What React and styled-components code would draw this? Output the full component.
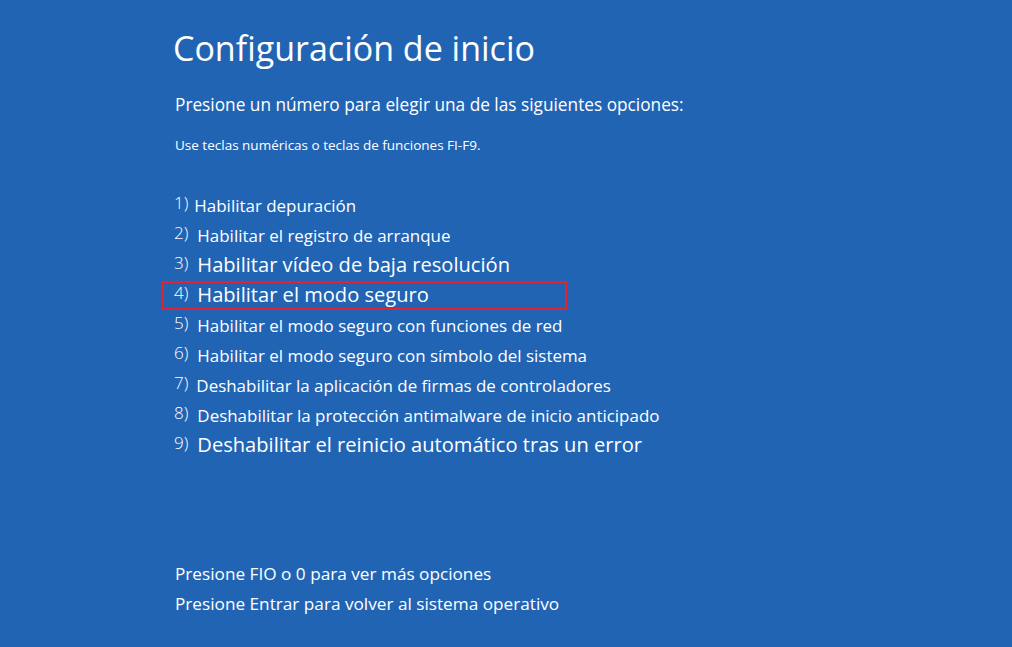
import React from 'react';
import styled, { createGlobalStyle } from 'styled-components';

const GlobalStyle = createGlobalStyle`
  html, body {
    margin: 0;
    padding: 0;
    background: #2264b4;
  }
  body {
    font-family: "Open Sans", "Liberation Sans", sans-serif;
    color: #ffffff;
  }
`;

const Screen = styled.div`
  box-sizing: border-box;
  width: 100%;
  height: 100vh;
  background: #2264b4;
  padding: 28px 0 0 173px;
  overflow: hidden;
`;

const Title = styled.h1`
  margin: 0;
  font-size: 34px;
  line-height: 40px;
  font-weight: 400;
`;

const Prompt = styled.p`
  margin: 27px 0 0 2px;
  font-size: 17.25px;
  line-height: 20px;
`;

const Hint = styled.p`
  margin: 22px 0 0 2px;
  font-size: 13.5px;
  line-height: 16px;
`;

const OptionList = styled.ol`
  list-style: none;
  margin: 35px 0 0 1px;
  padding: 0;
`;

const Option = styled.li`
  position: relative;
  height: 30px;
  line-height: 30px;
  white-space: nowrap;
  font-size: ${p => (p.$large ? '20.1px' : '16.95px')};

  &::after {
    content: '';
    display: ${p => (p.$selected ? 'block' : 'none')};
    position: absolute;
    left: -12px;
    top: 3px;
    width: 405px;
    height: 29px;
    box-sizing: border-box;
    border: 2px solid #e3222b;
  }
`;

const Num = styled.span`
  display: inline-block;
  font-size: 17px;
  font-weight: 300;
  vertical-align: 3px;
  margin-right: ${p => p.$gap}px;
`;

const Footer = styled.div`
  margin: 101px 0 0 2px;
`;

const FooterLine = styled.p`
  margin: 0;
  font-size: 17.2px;
  line-height: 30px;
`;

const options = [
  { text: 'Habilitar depuración', gap: 6 },
  { text: 'Habilitar el registro de arranque', gap: 9 },
  { text: 'Habilitar vídeo de baja resolución', gap: 9, large: true },
  { text: 'Habilitar el modo seguro', gap: 9, large: true, selected: true },
  { text: 'Habilitar el modo seguro con funciones de red', gap: 9 },
  { text: 'Habilitar el modo seguro con símbolo del sistema', gap: 9 },
  { text: 'Deshabilitar la aplicación de firmas de controladores', gap: 8 },
  { text: 'Deshabilitar la protección antimalware de inicio anticipado', gap: 9 },
  { text: 'Deshabilitar el reinicio automático tras un error', gap: 9, large: true },
];

export default function App() {
  return (
    <>
      <GlobalStyle />
      <Screen>
        <Title>Configuración de inicio</Title>
        <Prompt>Presione un número para elegir una de las siguientes opciones:</Prompt>
        <Hint>Use teclas numéricas o teclas de funciones FI-F9.</Hint>
        <OptionList>
          {options.map((o, i) => (
            <Option key={i} $large={o.large} $selected={o.selected}>
              <Num $gap={o.gap}>{i + 1})</Num>
              {o.text}
            </Option>
          ))}
        </OptionList>
        <Footer>
          <FooterLine>Presione FIO o 0 para ver más opciones</FooterLine>
          <FooterLine>Presione Entrar para volver al sistema operativo</FooterLine>
        </Footer>
      </Screen>
    </>
  );
}
